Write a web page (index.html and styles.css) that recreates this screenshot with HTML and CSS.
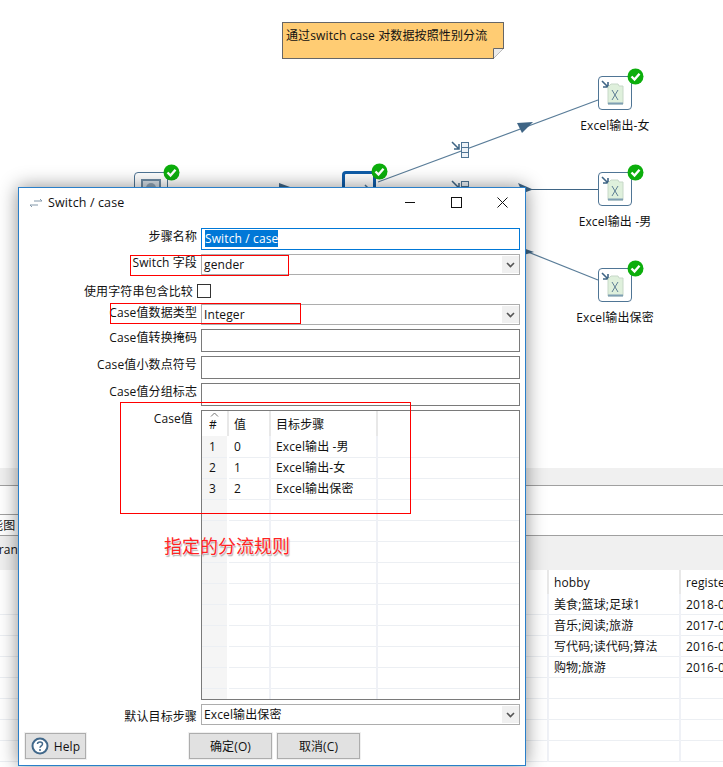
FILE: index.html
```html
<!DOCTYPE html>
<html lang="zh">
<head>
<meta charset="utf-8">
<title>Switch / case</title>
<link rel="stylesheet" href="styles.css">
</head>
<body>
<main class="workspace">
  <section class="canvas">
    <svg class="hops" width="723" height="468" viewBox="0 0 723 468">
      <g stroke="#5a7d99" stroke-width="1.2" fill="none">
        <line x1="378" y1="182" x2="598" y2="100"/>
        <line x1="378" y1="189.5" x2="598" y2="189.5" stroke="#3f6585"/>
        <line x1="378" y1="192" x2="598" y2="280"/>
      </g>
      <g fill="#3f6585">
        <path d="M533 122 L517 123 L522 133 Z"/>
        <path d="M533 189.5 L518 183 L521 189.5 L518 195 Z"/>
        <path d="M279 183 L290 187 L279 190 Z"/>
        <path d="M520 247 L534 252 L520 256 Z"/>
      </g>
      <g fill="#eef3f8" stroke="#4f7595" stroke-width="1">
        <rect x="461.5" y="142.5" width="7" height="15"/>
        <rect x="461.5" y="181.5" width="7" height="15"/>
      </g>
      <g stroke="#4f7595" stroke-width="1">
        <path d="M462 147.5h6M462 152.5h6M462 186.5h6"/>
      </g>
      <g stroke="#3f6585" stroke-width="1.5" fill="none">
        <path d="M452 142 L459 149 M459 144 V149 H454"/>
        <path d="M452 181 L459 188 M459 183 V188 H454"/>
      </g>
    </svg>

    <div class="note">
      <span>通过switch case 对数据按照性别分流</span>
      <svg class="note-fold" width="11" height="11" viewBox="0 0 11 11">
        <path d="M0 11 L11 0 V11 Z" fill="#fff"/>
        <path d="M0 11 L11 0 H0 Z" fill="#ececec"/>
        <path d="M0.5 11 V0.5 H11" fill="none" stroke="#666"/>
        <path d="M1 10 L10 1" stroke="#bbb"/>
      </svg>
    </div>

    <div class="node node-input">
      <svg class="node-glyph" width="24" height="24" viewBox="0 0 24 24">
        <rect x="3" y="3" width="18" height="18" fill="#d4dde5" stroke="#6e8ba3" stroke-width="2"/>
        <circle cx="12" cy="11" r="5" fill="#8ea4b6"/>
      </svg>
      <svg class="badge" width="17" height="17" viewBox="0 0 17 17"><circle cx="8.5" cy="8.5" r="8" fill="#0cae0c"/><path d="M4.5 8.5 L7.5 11.5 L12.5 5.8" fill="none" stroke="#fff" stroke-width="2.4"/></svg>
    </div>
    <div class="node node-switch">
      <svg class="node-glyph" width="24" height="24" viewBox="0 0 24 24">
        <path d="M3 10 H19 M15 6 L19 10" fill="none" stroke="#4f7595" stroke-width="1.5"/>
      </svg>
      <svg class="badge" width="17" height="17" viewBox="0 0 17 17"><circle cx="8.5" cy="8.5" r="8" fill="#0cae0c"/><path d="M4.5 8.5 L7.5 11.5 L12.5 5.8" fill="none" stroke="#fff" stroke-width="2.4"/></svg>
    </div>

    <div class="node node-excel node-excel-1">
      <svg class="node-glyph" width="32" height="32" viewBox="0 0 32 32">
        <path d="M3 4 L9 10 M9 5 V10 H4" fill="none" stroke="#3f6585" stroke-width="1.6"/>
        <path d="M9 27 V10 L12 7 H19 L20 9 H24 V27 Z" fill="#dff0dc" stroke="#c7d8c8"/>
        <path d="M9 26.5 H24" stroke="#7f9fb3" stroke-width="2"/>
        <path d="M13 13 L19 23 M19 13 L13 23" stroke="#5f7f95" stroke-width="1"/>
      </svg>
      <svg class="badge" width="17" height="17" viewBox="0 0 17 17"><circle cx="8.5" cy="8.5" r="8" fill="#0cae0c"/><path d="M4.5 8.5 L7.5 11.5 L12.5 5.8" fill="none" stroke="#fff" stroke-width="2.4"/></svg>
      <span class="node-label">Excel输出-女</span>
    </div>
    <div class="node node-excel node-excel-2">
      <svg class="node-glyph" width="32" height="32" viewBox="0 0 32 32">
        <path d="M3 4 L9 10 M9 5 V10 H4" fill="none" stroke="#3f6585" stroke-width="1.6"/>
        <path d="M9 27 V10 L12 7 H19 L20 9 H24 V27 Z" fill="#dff0dc" stroke="#c7d8c8"/>
        <path d="M9 26.5 H24" stroke="#7f9fb3" stroke-width="2"/>
        <path d="M13 13 L19 23 M19 13 L13 23" stroke="#5f7f95" stroke-width="1"/>
      </svg>
      <svg class="badge" width="17" height="17" viewBox="0 0 17 17"><circle cx="8.5" cy="8.5" r="8" fill="#0cae0c"/><path d="M4.5 8.5 L7.5 11.5 L12.5 5.8" fill="none" stroke="#fff" stroke-width="2.4"/></svg>
      <span class="node-label">Excel输出 -男</span>
    </div>
    <div class="node node-excel node-excel-3">
      <svg class="node-glyph" width="32" height="32" viewBox="0 0 32 32">
        <path d="M3 4 L9 10 M9 5 V10 H4" fill="none" stroke="#3f6585" stroke-width="1.6"/>
        <path d="M9 27 V10 L12 7 H19 L20 9 H24 V27 Z" fill="#dff0dc" stroke="#c7d8c8"/>
        <path d="M9 26.5 H24" stroke="#7f9fb3" stroke-width="2"/>
        <path d="M13 13 L19 23 M19 13 L13 23" stroke="#5f7f95" stroke-width="1"/>
      </svg>
      <svg class="badge" width="17" height="17" viewBox="0 0 17 17"><circle cx="8.5" cy="8.5" r="8" fill="#0cae0c"/><path d="M4.5 8.5 L7.5 11.5 L12.5 5.8" fill="none" stroke="#fff" stroke-width="2.4"/></svg>
      <span class="node-label">Excel输出保密</span>
    </div>
  </section>

  <section class="results">
    <div class="band-top"></div>
    <div class="pane-spacer"></div>
    <div class="pane-tabs"><span class="pane-tab">性能图</span></div>
    <div class="pane-toolbar"><span class="pane-name">Transformation</span></div>
    <table class="data">
      <colgroup><col class="col-rest"><col class="col-hobby"><col class="col-reg"></colgroup>
      <thead><tr><th></th><th>hobby</th><th>register</th></tr></thead>
      <tbody>
        <tr><td></td><td>美食;篮球;足球1</td><td>2018-01-01</td></tr>
        <tr><td></td><td>音乐;阅读;旅游</td><td>2017-01-01</td></tr>
        <tr><td></td><td>写代码;读代码;算法</td><td>2016-01-01</td></tr>
        <tr><td></td><td>购物;旅游</td><td>2016-01-01</td></tr>
        <tr><td></td><td></td><td></td></tr>
        <tr><td></td><td></td><td></td></tr>
        <tr><td></td><td></td><td></td></tr>
        <tr><td></td><td></td><td></td></tr>
      </tbody>
    </table>
  </section>
</main>

<div class="dialog">
  <header class="titlebar">
    <svg class="title-icon" width="14" height="10" viewBox="0 0 14 10">
      <path d="M5 3 H13 L11 1 M1 7 H9 M1 7 L3 9" fill="none" stroke="#8398aa" stroke-width="1"/>
    </svg>
    <span class="title-text">Switch / case</span>
    <div class="window-controls">
      <svg width="11" height="11" viewBox="0 0 11 11"><path d="M0 5.5 H10" stroke="#111"/></svg>
      <svg width="11" height="11" viewBox="0 0 11 11"><rect x="0.5" y="0.5" width="10" height="10" fill="none" stroke="#111"/></svg>
      <svg width="11" height="11" viewBox="0 0 11 11"><path d="M0.5 0.5 L10.5 10.5 M10.5 0.5 L0.5 10.5" stroke="#111"/></svg>
    </div>
  </header>

  <div class="form">
    <div class="row row-name">
      <label class="lbl">步骤名称</label>
      <div class="field field-focus"><span class="selected">Switch / case</span></div>
    </div>
    <div class="row row-combo">
      <label class="lbl">Switch 字段</label>
      <div class="field field-combo">gender<span class="combo-btn"><svg width="9" height="6" viewBox="0 0 9 6"><path d="M1 1 L4.5 4.5 L8 1" fill="none" stroke="#555" stroke-width="1.6"/></svg></span></div>
    </div>
    <div class="row row-check">
      <label class="lbl lbl-check">使用字符串包含比较</label>
      <span class="checkbox"></span>
    </div>
    <div class="row row-combo">
      <label class="lbl">Case值数据类型</label>
      <div class="field field-combo">Integer<span class="combo-btn"><svg width="9" height="6" viewBox="0 0 9 6"><path d="M1 1 L4.5 4.5 L8 1" fill="none" stroke="#555" stroke-width="1.6"/></svg></span></div>
    </div>
    <div class="row row-text">
      <label class="lbl">Case值转换掩码</label>
      <div class="field"></div>
    </div>
    <div class="row row-text">
      <label class="lbl">Case值小数点符号</label>
      <div class="field"></div>
    </div>
    <div class="row row-text">
      <label class="lbl">Case值分组标志</label>
      <div class="field"></div>
    </div>
    <div class="row row-table">
      <label class="lbl lbl-cases">Case值</label>
      <div class="grid-box">
        <table class="cases">
          <colgroup><col class="c-num"><col class="c-val"><col class="c-step"><col></colgroup>
          <thead>
            <tr><th class="th-num"><svg class="sort-caret" width="9" height="5" viewBox="0 0 9 5"><path d="M1 4.5 L4.5 1 L8 4.5" fill="none" stroke="#777"/></svg>#</th><th>值</th><th>目标步骤</th><th></th></tr>
          </thead>
          <tbody>
            <tr><td class="num">1</td><td>0</td><td>Excel输出 -男</td><td></td></tr>
            <tr><td class="num">2</td><td>1</td><td>Excel输出-女</td><td></td></tr>
            <tr><td class="num">3</td><td>2</td><td>Excel输出保密</td><td></td></tr>
            <tr><td class="num"></td><td></td><td></td><td></td></tr>
            <tr><td class="num"></td><td></td><td></td><td></td></tr>
            <tr><td class="num"></td><td></td><td></td><td></td></tr>
            <tr><td class="num"></td><td></td><td></td><td></td></tr>
            <tr><td class="num"></td><td></td><td></td><td></td></tr>
            <tr><td class="num"></td><td></td><td></td><td></td></tr>
            <tr><td class="num"></td><td></td><td></td><td></td></tr>
            <tr><td class="num"></td><td></td><td></td><td></td></tr>
            <tr><td class="num"></td><td></td><td></td><td></td></tr>
            <tr><td class="num"></td><td></td><td></td><td></td></tr>
          </tbody>
        </table>
      </div>
    </div>
    <div class="row row-combo">
      <label class="lbl lbl-default">默认目标步骤</label>
      <div class="field field-combo">Excel输出保密<span class="combo-btn"><svg width="9" height="6" viewBox="0 0 9 6"><path d="M1 1 L4.5 4.5 L8 1" fill="none" stroke="#555" stroke-width="1.6"/></svg></span></div>
    </div>
  </div>

  <footer class="footer">
    <button class="btn btn-help" type="button">
      <svg width="18" height="18" viewBox="0 0 18 18"><circle cx="9" cy="9" r="7.5" fill="#fff" stroke="#41688a" stroke-width="2"/><path d="M6.5 7 C6.5 4.2 11.5 4.2 11.5 7 C11.5 9 9 8.8 9 10.8" fill="none" stroke="#41688a" stroke-width="1.5"/><circle cx="9" cy="13" r="1" fill="#41688a"/></svg>
      Help
    </button>
    <button class="btn btn-main" type="button">确定(O)</button>
    <button class="btn btn-main" type="button">取消(C)</button>
  </footer>
</div>

<div class="mark mark-switch"></div>
<div class="mark mark-type"></div>
<div class="mark mark-cases"></div>
<div class="annotation">指定的分流规则</div>
</body>
</html>
```

FILE: styles.css
```css
* { box-sizing: border-box; }
html, body { margin: 0; height: 100%; }
body {
  width: 723px;
  height: 767px;
  overflow: hidden;
  position: relative;
  background: #fff;
  color: #111;
  font-family: "Open Sans", "Noto Sans CJK SC", sans-serif;
  font-size: 12px;
  line-height: 17px;
  letter-spacing: 0.12px;
}

/* canvas */
.workspace { display: flex; flex-direction: column; height: 767px; }
.canvas { position: relative; height: 468px; flex: none; }
.hops { position: absolute; left: 0; top: 0; }

.note {
  position: absolute;
  left: 282px;
  top: 22px;
  width: 222px;
  height: 37px;
  background: #ffcc73;
  border: 1px solid #666;
  padding: 4px 3px;
  white-space: nowrap;
}
.note-fold { position: absolute; right: -1px; bottom: -1px; }

.node {
  position: absolute;
  width: 34px;
  height: 34px;
  border: 1px solid #4f7595;
  border-radius: 4px;
  background: #fff;
}
.node-glyph { position: absolute; left: 0; top: 0; }
.badge { position: absolute; right: -13px; top: -9px; }
.node-input { left: 134px; top: 172px; }
.node-input .node-glyph { left: 4px; top: 4px; }
.node-switch { left: 342px; top: 171px; height: 36px; border: 3px solid #0f5ca8; }
.node-switch .node-glyph { left: 5px; top: 5px; }
.node-switch .badge { right: -15px; top: -11px; }
.node-excel { left: 598px; }
.node-excel-1 { top: 76px; }
.node-excel-2 { top: 172px; }
.node-excel-3 { top: 268px; }
.node-label {
  position: absolute;
  left: 50%;
  top: 40px;
  transform: translateX(-50%);
  white-space: nowrap;
}

/* results pane behind the dialog */
.results { flex: 1; min-height: 0; overflow: hidden; }
.band-top { height: 17px; background: #f0f0f0; }
.pane-spacer { height: 30px; border-top: 1px solid #a0a0a0; border-bottom: 1px solid #a0a0a0; }
.pane-tabs { height: 21px; padding-top: 2px; border-bottom: 1px solid #a0a0a0; overflow: hidden; white-space: nowrap; }
.pane-tab { display: block; margin-left: -21px; }
.pane-toolbar { height: 34px; background: #f0f0f0; white-space: nowrap; overflow: hidden; padding-top: 5px; }
.pane-name { display: block; margin-left: -8px; }

.data { border-collapse: collapse; table-layout: fixed; width: 776px; }
.col-rest { width: 548px; }
.col-hobby { width: 132px; }
.col-reg { width: 96px; }
.data th, .data td {
  height: 21px;
  padding: 1px 0 0 5px;
  font-weight: 400;
  text-align: left;
  border-bottom: 1px solid #eceff3;
  border-right: 2px solid #eff1f6;
  white-space: nowrap;
  overflow: hidden;
}
.data th { height: 24px; padding-top: 0; border-bottom: 0; border-right-color: #e8e8e8; }
.data tbody tr:first-child td { height: 20px; padding-top: 2px; }

/* dialog */
.dialog {
  position: absolute;
  left: 18px;
  top: 187px;
  width: 508px;
  height: 579px;
  background: #fff;
  border: 1px solid #2a7fc9;
  box-shadow: 0 0 18px rgba(0, 0, 0, 0.45);
  display: flex;
  flex-direction: column;
}
.titlebar { height: 40px; flex: none; display: flex; align-items: flex-start; padding: 6px 17px 0 10px; }
.title-icon { margin-top: 4px; margin-right: 5px; }
.title-text { font-size: 12.5px; }
.window-controls { margin-left: auto; display: flex; gap: 35px; padding-top: 3px; }

.form { display: flex; flex-direction: column; gap: 4px; }
.row { display: flex; gap: 4px; }
.row-name { height: 22px; }
.row-combo { height: 21px; }
.row-check { height: 21px; padding-top: 4px; }
.row-text { height: 23px; }
.row-table { height: 290px; }
.lbl { flex: none; width: 178px; text-align: right; white-space: nowrap; }
.lbl-check { width: 174px; }
.lbl-cases { padding-right: 4px; }
.lbl-default { padding-top: 4px; }

.field {
  flex: none;
  width: 319px;
  position: relative;
  border: 1px solid #7a7a7a;
  padding: 1px 2px;
  white-space: nowrap;
}
.field-combo { border-color: #adadad; padding-top: 1px; }
.field-focus { border-color: #0078d7; padding: 1px 3px; }
.selected { display: inline-block; height: 17px; background: #0078d7; color: #fff; }
.combo-btn {
  position: absolute;
  right: 0;
  top: 1px;
  bottom: 1px;
  width: 17px;
  background: #f0f0f0;
  display: flex;
  align-items: center;
  justify-content: center;
}
.checkbox { width: 14px; height: 14px; border: 1px solid #333; background: #fff; margin-top: 1px; }

.grid-box { flex: none; width: 319px; border: 1px solid #7a7a7a; overflow: hidden; }
.cases { border-collapse: collapse; table-layout: fixed; width: 317px; }
.c-num { width: 26px; }
.c-val { width: 42px; }
.c-step { width: 107px; }
.cases th, .cases td {
  height: 21px;
  padding: 0 0 0 5px;
  font-weight: 400;
  text-align: left;
  border-bottom: 1px solid #eceff3;
  border-right: 2px solid #eff1f6;
  white-space: nowrap;
  overflow: hidden;
}
.cases th { height: 25px; border-bottom: 0; padding-top: 2px; border-right-color: #e8e8e8; }
.cases th:last-child, .cases td:last-child { border-right: 0; }
.th-num { position: relative; }
.cases .th-num { padding-left: 7px; }
.cases .num { padding-left: 7px; background: #f5f5f5; border-right-color: #fff; }
.sort-caret { position: absolute; left: 8px; top: 1px; }

.footer { position: relative; display: flex; padding: 8px 0 0 6px; }
.btn {
  height: 26px;
  border: 1px solid #adadad;
  outline: 1px solid #f0f0f0;
  outline-offset: 0;
  background: #e1e1e1;
  font: inherit;
  letter-spacing: inherit;
  color: #111;
  padding: 0;
  display: flex;
  align-items: center;
  justify-content: center;
  gap: 5px;
}
.btn-help { width: 61px; margin-right: 103px; }
.btn-main { width: 83px; margin-right: 5px; }

/* screenshot annotations */
.mark { position: absolute; border: 1px solid #f00; }
.mark-switch { left: 130px; top: 255px; width: 159px; height: 21px; }
.mark-type { left: 110px; top: 303px; width: 191px; height: 21px; }
.mark-cases { left: 120px; top: 402px; width: 291px; height: 112px; }
.annotation {
  position: absolute;
  left: 164px;
  top: 534px;
  font-size: 18px;
  line-height: 24px;
  letter-spacing: 0;
  color: #f22;
  white-space: nowrap;
  text-shadow: 0 0 1px #fff, 1px 2px 1px #b5b5b5;
}
```
